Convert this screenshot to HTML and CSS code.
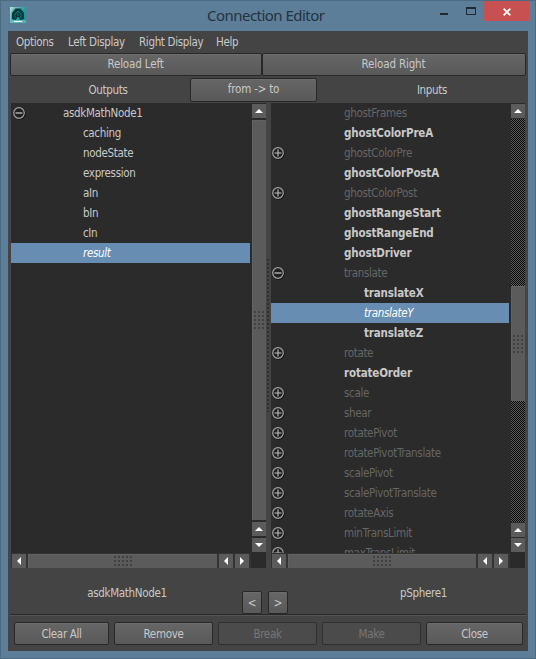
FILE: index.html
```html
<!DOCTYPE html>
<html lang="en">
<head>
<meta charset="utf-8">
<title>Connection Editor</title>
<link rel="stylesheet" href="styles.css">
</head>
<body>
<svg class="defs" width="0" height="0" aria-hidden="true">
  <symbol id="plus" viewBox="0 0 14 14"><circle cx="7.7" cy="7.7" r="5.2" fill="none" stroke="#111" stroke-width="1.6"/><circle cx="7" cy="7" r="5.3" fill="#202020" stroke="#a4a4a4" stroke-width="1.2"/><path d="M3.5 7h7M7 3.5v7" stroke="#c0c0c0" stroke-width="1.1"/></symbol>
  <symbol id="minus" viewBox="0 0 14 14"><circle cx="7.7" cy="7.7" r="5.2" fill="none" stroke="#111" stroke-width="1.6"/><circle cx="7" cy="7" r="5.3" fill="#202020" stroke="#a4a4a4" stroke-width="1.2"/><path d="M3.5 7h7" stroke="#c0c0c0" stroke-width="1.3"/></symbol>
</svg>
<div class="window">
  <header class="titlebar">
    <svg class="logo" viewBox="0 0 16 16">
      <defs><linearGradient id="lg" x2="1" y2="1"><stop stop-color="#a3d6d2"/><stop offset=".45" stop-color="#2aa5a2"/><stop offset="1" stop-color="#078f8d"/></linearGradient></defs>
      <path fill="url(#lg)" d="M0 0h16v16H0z"/>
      <path fill="#d0e5e2" d="M0 0h3L1 5v8H0zM0 13h16v3H0z" opacity=".4"/>
      <path fill="#06383d" d="M5.500 1.500h5L14 6v6l-3.500 1L8 9.500 5.500 13 2 12V6z"/>
      <path fill="none" stroke="#0f8585" stroke-width=".8" d="M5 11V7l3-3 3 3v4M8 4v5"/>
      <path stroke="#eef8f6" stroke-width="1" d="M4 14.500h8"/>
    </svg>
    <h1>Connection Editor</h1>
    <div class="controls">
      <svg viewBox="0 0 46 21" width="46" height="21"><path fill="#202a30" d="M4 13h8v2H4zM30 7h10v8H30zM31 9v5h8V9z" fill-rule="evenodd"/></svg>
      <svg class="close" viewBox="0 0 45 21" width="45" height="21"><path d="M19.500 8l7 7M26.500 8l-7 7" stroke="#fff" stroke-width="1.800"/></svg>
    </div>
  </header>
  <main class="client">
    <nav class="menu"><span class="m1">Options</span><span class="m2">Left Display</span><span class="m3">Right Display</span><span class="m4">Help</span></nav>
    <div class="reload"><button>Reload Left</button><button>Reload Right</button></div>
    <div class="heads"><span class="h-out">Outputs</span><button>from -&gt; to</button><span class="h-in">Inputs</span></div>
    <div class="panes">
      <section class="pane left">
        <ul class="tree">
          <li><svg class="tog"><use href="#minus"/></svg><span class="root">asdkMathNode1</span></li>
          <li class="sub"><span>caching</span></li>
          <li class="sub"><span>nodeState</span></li>
          <li class="sub"><span>expression</span></li>
          <li class="sub"><span>aIn</span></li>
          <li class="sub"><span>bIn</span></li>
          <li class="sub"><span>cIn</span></li>
          <li class="sub sel"><span>result</span></li>
        </ul>
        <div class="vbar"><i class="sb up"></i><i class="thumb"><b class="grip"></b></i><i class="sb up"></i><i class="sb down"></i></div>
        <div class="hbar"><i class="sb lt"></i><i class="thumb"><b class="grip"></b></i><i class="sb lt"></i><i class="sb rt"></i></div>
        <div class="corner"></div>
      </section>
      <div class="splitter"><i></i></div>
      <section class="pane right">
        <ul class="tree">
          <li class="dim"><span>ghostFrames</span></li>
          <li class="bold"><span>ghostColorPreA</span></li>
          <li class="dim"><svg class="tog"><use href="#plus"/></svg><span>ghostColorPre</span></li>
          <li class="bold"><span>ghostColorPostA</span></li>
          <li class="dim"><svg class="tog"><use href="#plus"/></svg><span>ghostColorPost</span></li>
          <li class="bold"><span>ghostRangeStart</span></li>
          <li class="bold"><span>ghostRangeEnd</span></li>
          <li class="bold"><span>ghostDriver</span></li>
          <li class="dim"><svg class="tog"><use href="#minus"/></svg><span>translate</span></li>
          <li class="bold sub"><span>translateX</span></li>
          <li class="sub sel"><span>translateY</span></li>
          <li class="bold sub"><span>translateZ</span></li>
          <li class="dim"><svg class="tog"><use href="#plus"/></svg><span>rotate</span></li>
          <li class="bold"><span>rotateOrder</span></li>
          <li class="dim"><svg class="tog"><use href="#plus"/></svg><span>scale</span></li>
          <li class="dim"><svg class="tog"><use href="#plus"/></svg><span>shear</span></li>
          <li class="dim"><svg class="tog"><use href="#plus"/></svg><span>rotatePivot</span></li>
          <li class="dim"><svg class="tog"><use href="#plus"/></svg><span>rotatePivotTranslate</span></li>
          <li class="dim"><svg class="tog"><use href="#plus"/></svg><span>scalePivot</span></li>
          <li class="dim"><svg class="tog"><use href="#plus"/></svg><span>scalePivotTranslate</span></li>
          <li class="dim"><svg class="tog"><use href="#plus"/></svg><span>rotateAxis</span></li>
          <li class="dim"><svg class="tog"><use href="#plus"/></svg><span>minTransLimit</span></li>
          <li class="dim"><svg class="tog"><use href="#plus"/></svg><span>maxTransLimit</span></li>
        </ul>
        <div class="vbar"><i class="sb up"></i><i class="track"><i class="thumb"><b class="grip"></b></i></i><i class="sb up"></i><i class="sb down"></i></div>
        <div class="hbar"><i class="sb lt"></i><i class="thumb"><b class="grip"></b></i><i class="sb lt"></i><i class="sb rt"></i></div>
        <div class="corner"></div>
      </section>
    </div>
    <div class="status"><span>asdkMathNode1</span><div class="steps"><button>&lt;</button><button>&gt;</button></div><span>pSphere1</span></div>
    <footer><button>Clear All</button><button>Remove</button><button disabled>Break</button><button disabled>Make</button><button>Close</button></footer>
  </main>
</div>
</body>
</html>
```
FILE: styles.css
```css
* { box-sizing: border-box; }
body { margin: 0; font: 11.5px/20px "DejaVu Sans Condensed", "DejaVu Sans", sans-serif; font-stretch: condensed; color: #c8c8c8; letter-spacing: -0.33px; }
.defs { display: block; height: 0; }
.window { width: 536px; height: 659px; background: #5d7e98; border: 1px solid #4b6b83; padding: 0 7px 7px; display: flex; flex-direction: column; overflow: hidden; }
.titlebar { height: 30px; flex: none; display: grid; grid-template-columns: 20px 1fr 91px; }
.logo { width: 16px; height: 16px; margin: 6px 0 0 2px; }
h1 { margin: 0; font: 15px/29px "Noto Sans", sans-serif; letter-spacing: -0.53px; color: #24323e; padding-left: 179px; white-space: nowrap; }
.controls { display: flex; height: 20px; margin-left: -1px; }
.controls svg { flex: none; margin-top: -1px; }
.controls .close { background: #c75050; margin: 0 0 0 2px; height: 20px; }
.client { flex: 1; background: #444; display: flex; flex-direction: column; border: 1px solid #3d454b; border-width: 1px 0 0; min-height: 0; }
button { font: inherit; font-stretch: condensed; letter-spacing: inherit; color: #c8c8c8; padding: 0; border: 1px solid #282828; border-radius: 2px; background: linear-gradient(#666, #595959); box-shadow: inset 0 1px #6d6d6d; white-space: nowrap; }
.menu { height: 21px; display: flex; padding-left: 8px; line-height: 20px; flex: none; }
.m1 { width: 52px; } .m2 { width: 71px; } .m3 { width: 77px; }
.reload { display: grid; grid-template-columns: 252px 264px; height: 23px; margin-left: 2px; flex: none; letter-spacing: -0.15px; }
.reload button { padding-right: 1px; line-height: 18px; padding-bottom: 1px; }
.heads { display: grid; grid-template-columns: 180px 127px 209px; height: 23px; margin: 2px 0 0 2px; line-height: 24px; text-align: center; flex: none; }
.heads button { line-height: 21px; padding-bottom: 1px; letter-spacing: -0.2px; }
.h-out { padding-left: 16px; }
.h-in { padding-left: 21px; }
.panes { display: flex; margin: 2px 3px 0; height: 465px; flex: none; }
.pane { display: grid; grid-template: 450px 15px / 1fr 15px; overflow: hidden; }
.left { width: 255px; }
.right { width: 254px; }
.tree { list-style: none; margin: 0; padding: 0; background: #2b2b2b; overflow: hidden; line-height: 21px; }
li { height: 20px; display: flex; padding-left: 52px; margin-right: 1px; white-space: nowrap; }
.sub { padding-left: 72px; }
.right li { padding-left: 73px; }
.right .sub { padding-left: 93px; }
.tog { width: 14px; height: 14px; flex: none; margin: 3px 38px 0 -52px; }
.left .tog { margin-left: -51px; margin-right: 37px; }
.right .tog { margin: 3px 59px 0 -73px; }
.dim { color: #666; }
.bold { font-weight: bold; letter-spacing: -0.15px; }
.sel { background: #678db2; color: #fff; font-style: italic; }
.vbar { background: #2b2b2b; padding: 1px 0 1px 1px; display: flex; flex-direction: column; gap: 2px; }
.hbar { background: #333; padding: 1px 2px 0 1px; display: flex; gap: 2px; }
.corner { background: #2b2b2b; }
.sb { width: 14px; height: 14px; flex: none; background: #5b5b5b; display: grid; place-items: center; }
.sb::before { content: ""; width: 8px; height: 4px; background: #fff; clip-path: polygon(50% 0, 100% 100%, 0 100%); }
.down::before { clip-path: polygon(0 0, 100% 0, 50% 100%); }
.lt::before { width: 4px; height: 8px; clip-path: polygon(100% 0, 100% 100%, 0 50%); }
.rt::before { width: 4px; height: 8px; clip-path: polygon(0 0, 100% 50%, 0 100%); }
.thumb { flex: 1; background: #5b5b5b; display: grid; place-items: center; border: 1px solid #626262; border-width: 1px 0 0 1px; }
.grip { width: 11px; height: 19px; background: radial-gradient(circle at 1px 1px, #414141 0.9px, transparent 1.1px) 0 0 / 4px 4px; }
.hbar .grip { width: 19px; height: 11px; }
.track { flex: 1; padding: 167px 0 121px; display: flex; background: repeating-conic-gradient(#5c5c5c 0 25%, #080808 0 50%) 0 0 / 2px 2px; }
.right .vbar { gap: 1px; }
.splitter { width: 5px; display: grid; place-items: center; }
.splitter i { width: 3px; height: 153px; background: radial-gradient(circle at 1px 1px, #2f2f2f 0.9px, transparent 1.1px) 0 0 / 4px 4px; }
.status { height: 47px; border-bottom: 1px solid #282828; box-shadow: 0 1px #555; margin: 0 2px; display: grid; grid-template-columns: 232px 46px 1fr; text-align: center; flex: none; }
.status > span { padding-top: 15px; }
.status > span:first-child { padding-left: 2px; }
.status > span:last-child { padding-left: 57px; text-align: left; margin-left: 55px; }
.steps { display: flex; gap: 6px; align-items: end; }
.steps button { width: 20px; height: 23px; flex: none; }
footer { display: grid; grid-template-columns: 95px 99px 99px 99px 97px; column-gap: 5px; margin: 7px 0 0 6px; height: 23px; flex: none; }
footer button { line-height: 18px; }
button:disabled { background: #4b4b4b; color: #777; box-shadow: none; border-color: #303030; }
```
